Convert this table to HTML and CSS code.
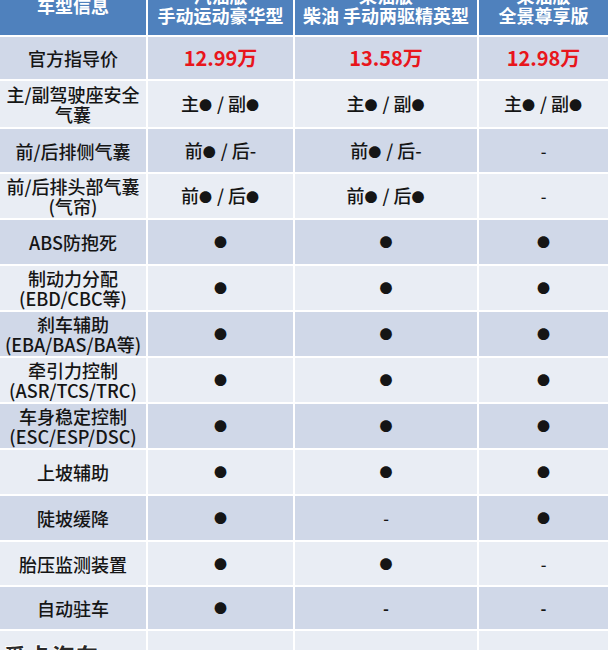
FILE: index.html
```html
<!DOCTYPE html>
<html lang="zh-CN">
<head>
<meta charset="utf-8">
<title>安全配置对比</title>
<link rel="stylesheet" href="styles.css">
</head>
<body>
<div class="page">
  <div class="table">
    <div class="row head">
      <div class="cell"><span>车型信息</span></div>
      <div class="cell"><span>汽油版</span><span>手动运动豪华型</span></div>
      <div class="cell"><span>柴油版</span><span>柴油 手动两驱精英型</span></div>
      <div class="cell"><span>柴油版</span><span>全景尊享版</span></div>
    </div>
    <div class="row dark h42">
      <div class="cell"><span>官方指导价</span></div>
      <div class="cell price"><span>12.99万</span></div>
      <div class="cell price"><span>13.58万</span></div>
      <div class="cell price"><span>12.98万</span></div>
    </div>
    <div class="row light h46">
      <div class="cell"><span>主/副驾驶座安全</span><span>气囊</span></div>
      <div class="cell"><span>主<i>●</i> / 副<i>●</i></span></div>
      <div class="cell"><span>主<i>●</i> / 副<i>●</i></span></div>
      <div class="cell"><span>主<i>●</i> / 副<i>●</i></span></div>
    </div>
    <div class="row dark h43">
      <div class="cell"><span>前/后排侧气囊</span></div>
      <div class="cell"><span>前<i>●</i> / 后-</span></div>
      <div class="cell"><span>前<i>●</i> / 后-</span></div>
      <div class="cell dash"><span>-</span></div>
    </div>
    <div class="row light h44">
      <div class="cell"><span>前/后排头部气囊</span><span>(气帘)</span></div>
      <div class="cell"><span>前<i>●</i> / 后<i>●</i></span></div>
      <div class="cell"><span>前<i>●</i> / 后<i>●</i></span></div>
      <div class="cell dash"><span>-</span></div>
    </div>
    <div class="row dark h44">
      <div class="cell"><span>ABS防抱死</span></div>
      <div class="cell"><i>●</i></div>
      <div class="cell"><i>●</i></div>
      <div class="cell"><i>●</i></div>
    </div>
    <div class="row light h44">
      <div class="cell"><span>制动力分配</span><span>(EBD/CBC等)</span></div>
      <div class="cell"><i>●</i></div>
      <div class="cell"><i>●</i></div>
      <div class="cell"><i>●</i></div>
    </div>
    <div class="row dark h44">
      <div class="cell"><span>刹车辅助</span><span>(EBA/BAS/BA等)</span></div>
      <div class="cell"><i>●</i></div>
      <div class="cell"><i>●</i></div>
      <div class="cell"><i>●</i></div>
    </div>
    <div class="row light h44">
      <div class="cell"><span>牵引力控制</span><span>(ASR/TCS/TRC)</span></div>
      <div class="cell"><i>●</i></div>
      <div class="cell"><i>●</i></div>
      <div class="cell"><i>●</i></div>
    </div>
    <div class="row dark h44">
      <div class="cell"><span>车身稳定控制</span><span>(ESC/ESP/DSC)</span></div>
      <div class="cell"><i>●</i></div>
      <div class="cell"><i>●</i></div>
      <div class="cell"><i>●</i></div>
    </div>
    <div class="row light h44">
      <div class="cell"><span>上坡辅助</span></div>
      <div class="cell"><i>●</i></div>
      <div class="cell"><i>●</i></div>
      <div class="cell"><i>●</i></div>
    </div>
    <div class="row dark h44">
      <div class="cell"><span>陡坡缓降</span></div>
      <div class="cell"><i>●</i></div>
      <div class="cell dash"><span>-</span></div>
      <div class="cell"><i>●</i></div>
    </div>
    <div class="row light h43">
      <div class="cell"><span>胎压监测装置</span></div>
      <div class="cell"><i>●</i></div>
      <div class="cell"><i>●</i></div>
      <div class="cell dash"><span>-</span></div>
    </div>
    <div class="row dark h42">
      <div class="cell"><span>自动驻车</span></div>
      <div class="cell"><i>●</i></div>
      <div class="cell dash bold"><span>-</span></div>
      <div class="cell dash bold"><span>-</span></div>
    </div>
    <div class="row light h40">
      <div class="cell"></div>
      <div class="cell"></div>
      <div class="cell"></div>
      <div class="cell"></div>
    </div>
  </div>
  <div class="watermark">爱卡汽车<small>XcAr</small></div>
</div>
</body>
</html>
```

FILE: styles.css
```css
html, body {
  margin: 0;
  padding: 0;
  overflow: hidden;
  background: #ffffff;
}
.page {
  position: relative;
  width: 608px;
  height: 650px;
  overflow: hidden;
  font-family: "Noto Sans CJK SC", "Noto Sans", sans-serif;
  color: #151515;
}
.table {
  display: flex;
  flex-direction: column;
  gap: 2px;
  margin-top: -25px;
}
.row {
  display: grid;
  grid-template-columns: 146px 145px 182px 1fr;
  grid-template-rows: 100%;
  gap: 2px;
}
.cell {
  display: flex;
  flex-direction: column;
  align-items: center;
  justify-content: center;
  text-align: center;
  font-size: 18px;
  font-weight: 500;
  line-height: 20px;
  white-space: nowrap;
  overflow: hidden;
}
.cell > span { display: block; }
.cell i {
  font-style: normal;
  font-size: 13px;
  vertical-align: 1px;
  margin-right: 1px;
}
.cell > i {
  font-size: 13px;
  line-height: 20px;
  margin-right: 0;
}
.row.head { height: 60px; }
.row.head .cell {
  background: #4f81bd;
  color: #ffffff;
  font-weight: 700;
}
.row.dark .cell { background: #d0d8e8; }
.row.light .cell { background: #e9edf4; }
.h40 { height: 40px; }
.h42 { height: 42px; }
.h43 { height: 43px; }
.h44 { height: 44px; }
.h46 { height: 46px; }
.cell.price {
  color: #e8161c;
  font-weight: 700;
  font-size: 20px;
}
.cell.dash { font-size: 16px; }
.cell.dash.bold { font-weight: 700; }
.watermark {
  position: absolute;
  left: 4px;
  top: 638px;
  font-size: 22px;
  font-weight: 700;
  color: #2a2a2a;
  letter-spacing: 2px;
  text-shadow: 0 0 2px #ffffff, 0 0 2px #ffffff, 1px 1px 0 #ffffff, -1px -1px 0 #ffffff;
}
.watermark small {
  font-size: 14px;
  margin-left: 6px;
  font-weight: 400;
}
```
